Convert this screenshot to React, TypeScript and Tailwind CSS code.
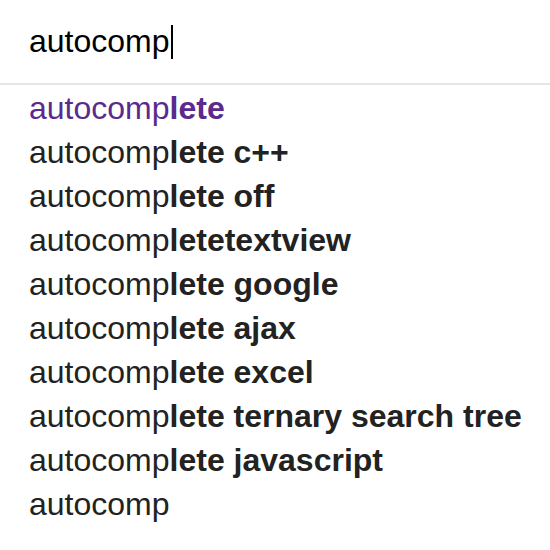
import React from 'react';

const query = 'autocomp';

const suggestions: { rest: string; visited?: boolean }[] = [
  { rest: 'lete', visited: true },
  { rest: 'lete c++' },
  { rest: 'lete off' },
  { rest: 'letetextview' },
  { rest: 'lete google' },
  { rest: 'lete ajax' },
  { rest: 'lete excel' },
  { rest: 'lete ternary search tree' },
  { rest: 'lete javascript' },
  { rest: '' },
];

const App = () => {
  return (
    <div
      className="w-[550px] h-[550px] bg-white overflow-hidden text-[32px] text-[#222222]"
      style={{ fontFamily: '"Liberation Sans", Arial, sans-serif' }}
    >
      <div className="h-[85px] border-b-2 border-[#e6e6e6] flex items-center px-[29px]">
        <span className="text-black leading-none pb-[2px]">{query}</span>
        <span className="inline-block w-[2px] h-[34px] bg-black ml-[1px]" />
      </div>
      <ul className="pt-[1px]">
        {suggestions.map((s, i) => (
          <li
            key={i}
            className={`h-[44px] flex items-center px-[29px] whitespace-pre ${s.visited ? 'text-[#5a2a8e]' : ''}`}
          >
            <span>{query}</span>
            {s.rest && <span className="font-bold">{s.rest}</span>}
          </li>
        ))}
      </ul>
    </div>
  );
};

export default App;
